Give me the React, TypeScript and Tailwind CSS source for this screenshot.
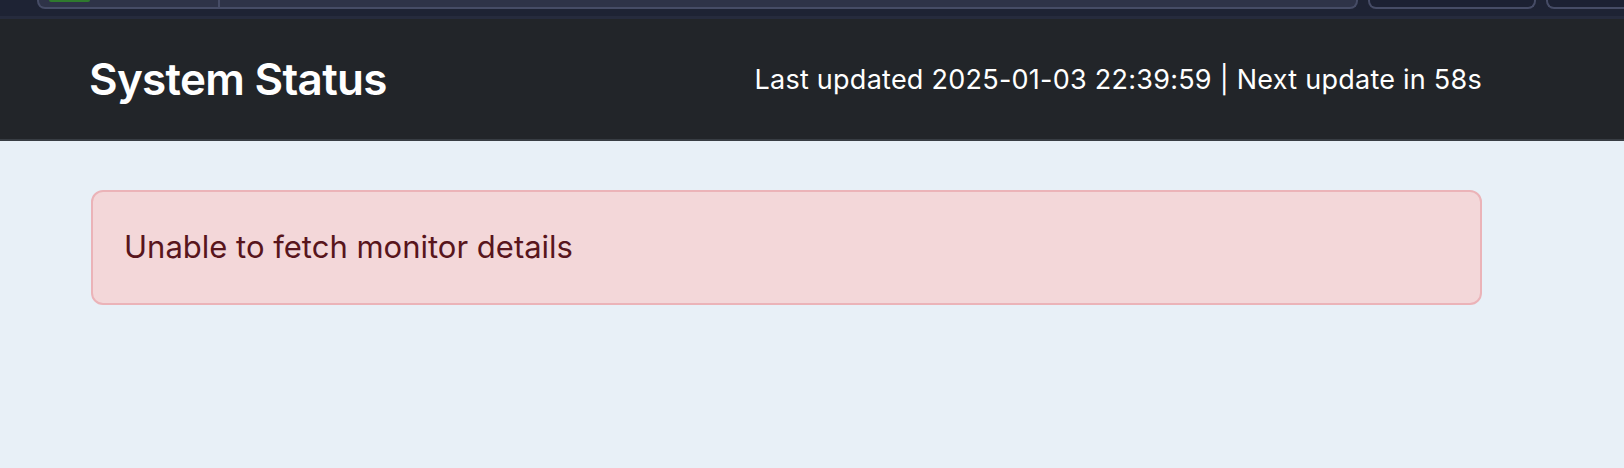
import React from "react";

export default function App() {
  return (
    <div className="min-h-[468px] w-full bg-[#e8f0f7]" style={{ fontFamily: "Inter, 'Noto Sans', sans-serif" }}>
      {/* browser-ish top strip */}
      <div className="flex h-[19px] items-start border-b-[3px] border-[#262b3d] bg-[#1e2334] pl-[37px]">
        <div className="relative flex h-[9px] w-[1321px] rounded-b-[8px] border-x-2 border-b-2 border-[#464c66] bg-[#2e3348]">
          <div className="ml-[10px] h-[2px] w-[41px] rounded-b-sm bg-[#2f7a2e]" />
          <div className="ml-[128px] h-full w-[2px] bg-[#464c66]" />
        </div>
        <div className="ml-[10px] h-[9px] w-[168px] rounded-b-[8px] border-x-2 border-b-2 border-[#464c66] bg-[#1c2133]" />
        <div className="ml-[10px] h-[9px] flex-1 rounded-bl-[8px] border-b-2 border-l-2 border-[#464c66] bg-[#1c2133]" />
      </div>

      {/* header */}
      <header className="h-[122px] border-b-2 border-[#383d43] bg-[#222529]">
        <div className="ml-[91px] flex h-full w-[1391px] items-center justify-between">
          <h1 className="-ml-[2px] text-[44px] font-semibold leading-none tracking-[-0.7px] text-white">System Status</h1>
          <div className="text-[27px] leading-none tracking-[0.25px] text-white">
            Last updated 2025-01-03 22:39:59 | Next update in 58s
          </div>
        </div>
      </header>

      {/* content */}
      <main className="ml-[91px] w-[1391px] pt-[49px]">
        <div className="flex h-[115px] items-center rounded-[12px] border-2 border-[#ebb3b8] bg-[#f3d7d9] px-[31px] text-[31px] text-[#58151c]">
          Unable to fetch monitor details
        </div>
      </main>
    </div>
  );
}
